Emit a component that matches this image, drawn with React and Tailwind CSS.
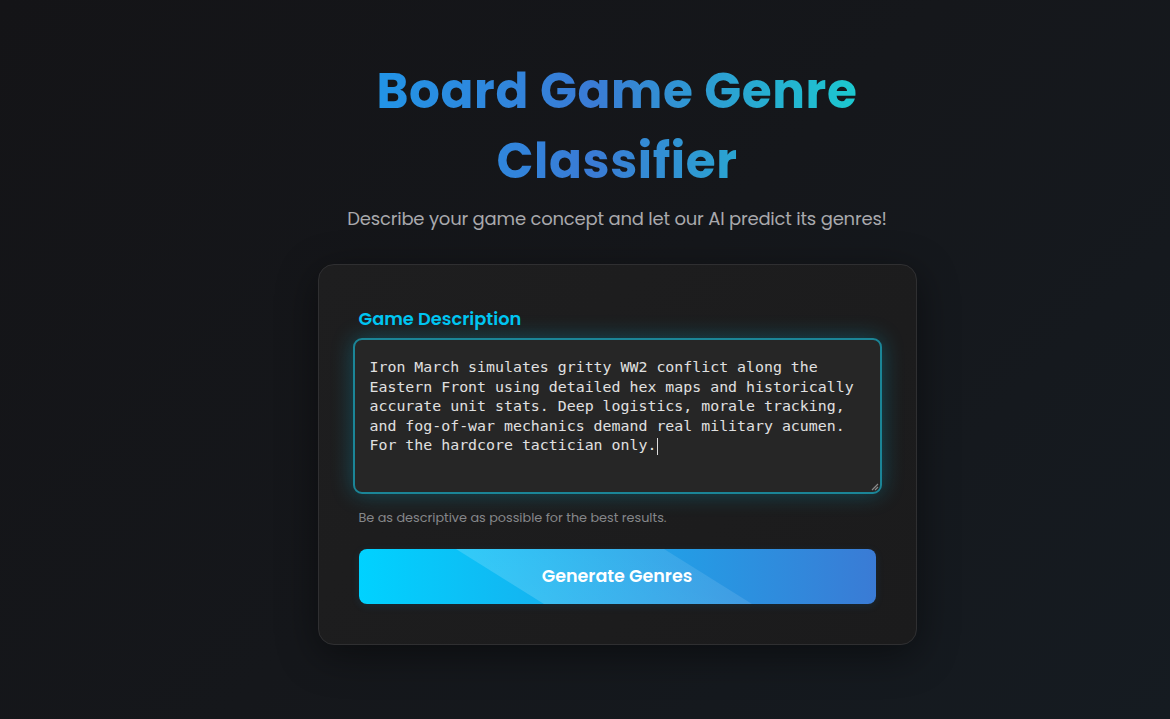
import React from "react";

export default function App() {
  const text =
    "Iron March simulates gritty WW2 conflict along the Eastern Front using detailed hex maps and historically accurate unit stats. Deep logistics, morale tracking, and fog-of-war mechanics demand real military acumen. For the hardcore tactician only.";
  return (
    <div
      className="min-h-[719px] w-full bg-[linear-gradient(135deg,#141417_0%,#15171b_50%,#151b21_100%)] flex flex-col items-center pt-[56px] pl-[64px]"
      style={{ fontFamily: "Poppins, Inter, 'Noto Sans', sans-serif" }}
    >
      <div className="w-[600px] flex flex-col items-center">
        <h1 className="text-center text-[48.5px] font-bold leading-[70px] tracking-[0.6px] bg-[linear-gradient(90deg,#2294e6_0%,#3a7bd5_45%,#1cc8cf_100%)] bg-clip-text text-transparent">
          Board Game Genre
          <br />
          Classifier
        </h1>
        <p className="mt-[9px] text-[18px] text-[#a9a9ad] leading-[28px] tracking-[-0.2px] whitespace-nowrap">
          Describe your game concept and let our AI predict its genres!
        </p>
      </div>

      <div className="mt-[31px] w-[599px] h-[381px] rounded-[16px] border border-[#2f2f31] bg-[linear-gradient(135deg,#1e1e1f,#1b1b1c)] shadow-[0_10px_40px_rgba(0,0,0,0.45)] px-[40px] pt-[42px]">
        <label className="block text-[17.8px] font-semibold text-[#00c6f2] leading-[24px]">
          Game Description
        </label>
        <div className="mt-[7px] -mx-[6px] h-[156px] rounded-[9px] border-2 border-[#1b8597] bg-[#262626] shadow-[0_0_22px_rgba(0,190,230,0.3)] relative">
          <div
            className="px-[15px] pt-[18px] text-[14.9px] leading-[19.5px] text-[#e0e0e0]"
            style={{ fontFamily: "'DejaVu Sans Mono', 'Liberation Mono', monospace" }}
          >
            {text}
            <span className="inline-block w-[1px] h-[17px] bg-[#dcdcdc] align-middle ml-[1px]" />
          </div>
          <svg className="absolute right-[1px] bottom-[1px]" width="9" height="9" viewBox="0 0 9 9">
            <path d="M8 2 L2 8 M8 5 L5 8" stroke="#8a8a8a" strokeWidth="1.2" />
          </svg>
        </div>
        <p className="mt-[15px] text-[12.8px] text-[#85878a] leading-[18px]">
          Be as descriptive as possible for the best results.
        </p>
        <button className="mt-[22px] w-full h-[55px] rounded-[8px] relative overflow-hidden bg-[linear-gradient(90deg,#00d2ff,#3a7bd5)] text-white text-[17.5px] font-semibold shadow-[0_2px_8px_rgba(0,150,230,0.12)]">
          <span className="absolute top-0 bottom-0 left-[97px] w-[208px] origin-top-left skew-x-[58deg] bg-[linear-gradient(90deg,rgba(255,255,255,0.16),rgba(255,255,255,0.1))]" />
          <span className="relative">Generate Genres</span>
        </button>
      </div>
    </div>
  );
}
